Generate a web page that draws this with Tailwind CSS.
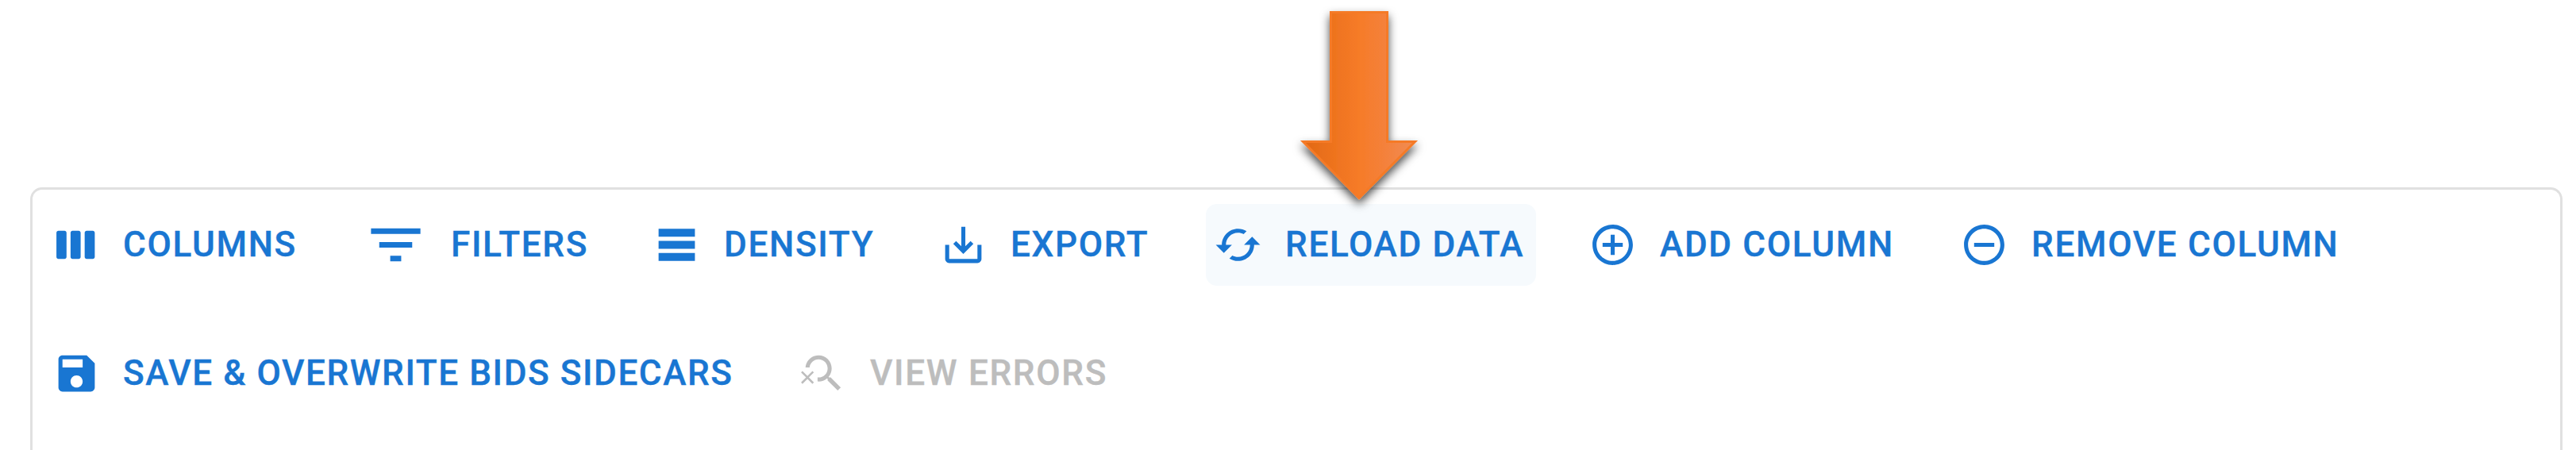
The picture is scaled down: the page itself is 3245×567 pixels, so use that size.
<!DOCTYPE html>
<html lang="en">
<head>
<meta charset="utf-8">
<title>Data grid toolbar</title>
<script src="https://cdn.jsdelivr.net/npm/@tailwindcss/browser@4"></script>
</head>
<body class="relative h-[567px] overflow-hidden bg-white pt-[236px] pl-[38px] font-['Roboto',sans-serif] text-[44px] font-medium leading-[77px] tracking-[1.7px] text-[#1976d2] [-webkit-text-stroke:0.4px_currentColor]">
<main class="flex h-[331px] w-[3190px] flex-col gap-[59px] rounded-t-[15px] border-[3.5px] border-b-0 border-[#e0e0e0] pt-[18px] pl-[14px]">
  <div class="flex h-[103px] gap-[56px] whitespace-nowrap">
    <button class="flex w-[339px] shrink-0 items-center gap-[28px] pl-[11px]">
      <svg class="size-[61px] shrink-0" viewBox="0 0 24 24" fill="currentColor"><path d="M6 5H3c-.55 0-1 .45-1 1v12c0 .55.45 1 1 1h3c.55 0 1-.45 1-1V6c0-.55-.45-1-1-1zm14 0h-3c-.55 0-1 .45-1 1v12c0 .55.45 1 1 1h3c.55 0 1-.45 1-1V6c0-.55-.45-1-1-1zm-7 0h-3c-.55 0-1 .45-1 1v12c0 .55.45 1 1 1h3c.55 0 1-.45 1-1V6c0-.55-.45-1-1-1z"/></svg>
      <span class="-mt-px">COLUMNS</span>
    </button>
    <button class="flex w-[306px] shrink-0 items-center gap-[28px] pl-[7px]">
      <svg class="size-[83px] shrink-0" viewBox="0 0 24 24" fill="currentColor"><path d="M10 18h4v-2h-4v2zM3 6v2h18V6H3zm3 7h12v-2H6v2z"/></svg>
      <span class="-mt-px">FILTERS</span>
    </button>
    <button class="flex w-[305px] shrink-0 items-center gap-[29px] pl-[10px]">
      <svg class="size-[61px] shrink-0" viewBox="0 0 24 24" fill="currentColor"><path d="M21 8H3V4h18v4zm0 2H3v4h18v-4zm0 6H3v4h18v-4z"/></svg>
      <span class="-mt-px">DENSITY</span>
    </button>
    <button class="flex w-[290px] shrink-0 items-center gap-[29px] pl-[10px]">
      <svg class="size-[61px] shrink-0" viewBox="0 0 24 24" fill="currentColor"><path d="M19 12v7H5v-7H3v7c0 1.1.9 2 2 2h14c1.1 0 2-.9 2-2v-7h-2zm-6 .67l2.59-2.58L17 11.5l-5 5-5-5 1.41-1.41L11 12.67V3h2z"/></svg>
      <span class="-mt-px">EXPORT</span>
    </button>
    <button class="flex w-[416px] shrink-0 items-center gap-[29px] rounded-[14px] bg-[#f6fafd] pl-[10px]">
      <svg class="size-[61px] shrink-0" viewBox="0 0 24 24" fill="currentColor"><path d="M19 8l-4 4h3c0 3.31-2.69 6-6 6-1.01 0-1.97-.25-2.8-.7l-1.46 1.46C8.97 19.54 10.43 20 12 20c4.42 0 8-3.58 8-8h3l-4-4zM6 12c0-3.31 2.69-6 6-6 1.01 0 1.97.25 2.8.7l1.46-1.46C15.03 4.46 13.57 4 12 4c-4.42 0-8 3.58-8 8H1l4 4 4-4H6z"/></svg>
      <span class="-mt-px">RELOAD DATA</span>
    </button>
    <button class="flex w-[412px] shrink-0 items-center gap-[29px] pl-[10px]">
      <svg class="size-[61px] shrink-0" viewBox="0 0 24 24" fill="currentColor"><path d="M13 7h-2v4H7v2h4v4h2v-4h4v-2h-4V7zm-1-5C6.48 2 2 6.48 2 12s4.48 10 10 10 10-4.48 10-10S17.52 2 12 2zm0 18c-4.41 0-8-3.59-8-8s3.59-8 8-8 8 3.59 8 8-3.59 8-8 8z"/></svg>
      <span class="-mt-px">ADD COLUMN</span>
    </button>
    <button class="flex w-[505px] shrink-0 items-center gap-[29px] pl-[10px]">
      <svg class="size-[61px] shrink-0" viewBox="0 0 24 24" fill="currentColor"><path d="M7 11v2h10v-2H7zm5-9C6.48 2 2 6.48 2 12s4.48 10 10 10 10-4.48 10-10S17.52 2 12 2zm0 18c-4.41 0-8-3.59-8-8s3.59-8 8-8 8 3.59 8 8-3.59 8-8 8z"/></svg>
      <span class="-mt-px">REMOVE COLUMN</span>
    </button>
  </div>
  <div class="flex h-[103px] gap-[56px] whitespace-nowrap">
    <button class="flex w-[886px] shrink-0 items-center gap-[28px] pl-[11px] tracking-[1.6px]">
      <svg class="size-[61px] shrink-0" viewBox="0 0 24 24" fill="currentColor"><path d="M17 3H5c-1.11 0-2 .9-2 2v14c0 1.1.89 2 2 2h14c1.1 0 2-.9 2-2V7l-4-4zm-5 16c-1.66 0-3-1.34-3-3s1.34-3 3-3 3 1.34 3 3-1.34 3-3 3zm3-10H5V5h10v4z"/></svg>
      <span class="-mt-px">SAVE &amp; OVERWRITE BIDS SIDECARS</span>
    </button>
    <button class="flex shrink-0 items-center gap-[28px] pl-[10px] text-[#bdbdbd]" disabled>
      <svg class="size-[61px] shrink-0" viewBox="0 0 24 24" fill="currentColor"><path d="M15.5 14h-.79l-.28-.27C15.41 12.59 16 11.11 16 9.5 16 5.91 13.09 3 9.5 3 6.08 3 3.28 5.64 3.03 9h2.02C5.3 6.75 7.18 5 9.5 5 11.99 5 14 7.01 14 9.5S11.99 14 9.5 14c-.17 0-.33-.03-.5-.05v2.02c.17.02.33.03.5.03 1.61 0 3.09-.59 4.23-1.57l.27.28v.79l5 4.99L20.49 19l-4.99-5z"/><path d="M6.47 10.82 4 13.29l-2.47-2.47-.71.71L3.29 14 .82 16.47l.71.71L4 14.71l2.47 2.47.71-.71L4.71 14l2.47-2.47z"/></svg>
      <span class="-mt-px">VIEW ERRORS</span>
    </button>
  </div>
</main>
<!-- Callout arrow over the reload button -->
<svg class="absolute top-0 left-[1600px] h-[290px] w-[240px]" viewBox="0 0 240 290">
  <defs>
    <linearGradient id="orange" gradientUnits="userSpaceOnUse" x1="38" y1="0" x2="186" y2="0">
      <stop offset="0" stop-color="#df6713"/><stop offset=".28" stop-color="#ee731e"/><stop offset=".5" stop-color="#f67b28"/><stop offset=".72" stop-color="#f4813b"/><stop offset="1" stop-color="#f08d57"/>
    </linearGradient>
    <filter id="shadow" x="-30%" y="-20%" width="160%" height="140%"><feDropShadow dx="0" dy="6" stdDeviation="6" flood-color="#000" flood-opacity=".7"/></filter>
  </defs>
  <path d="M76.500 15.500H147.500V178.500H182.500L112 249.500L41.500 178.500H76.500Z" fill="url(#orange)" stroke="#f57a26" stroke-width="3" filter="url(#shadow)"/>
</svg>
</body>
</html>
